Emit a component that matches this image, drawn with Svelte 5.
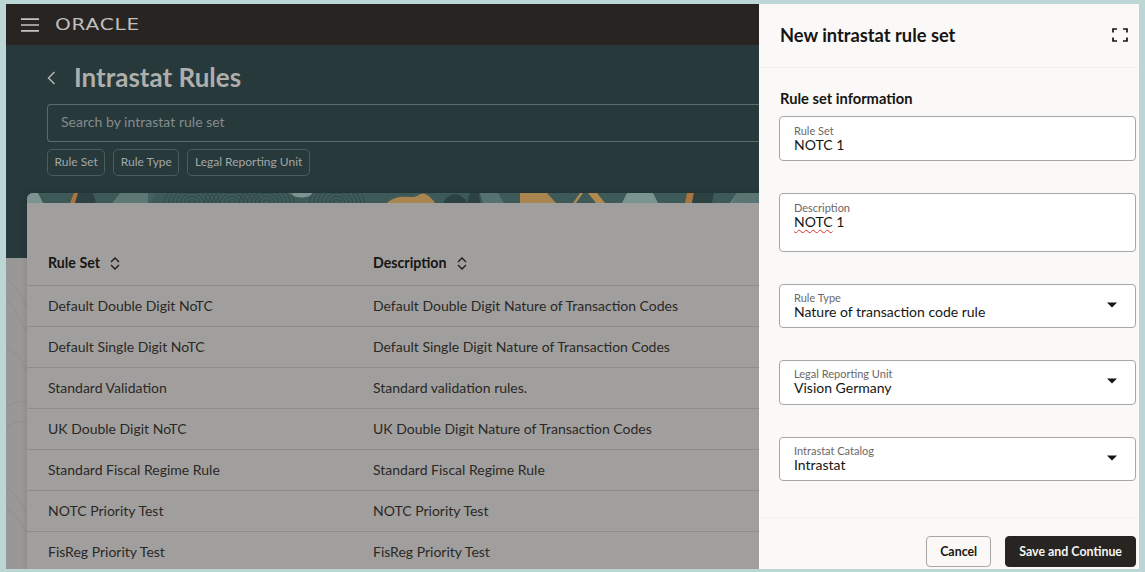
<script>
  const rows = [
    ['Default Double Digit NoTC', 'Default Double Digit Nature of Transaction Codes'],
    ['Default Single Digit NoTC', 'Default Single Digit Nature of Transaction Codes'],
    ['Standard Validation', 'Standard validation rules.'],
    ['UK Double Digit NoTC', 'UK Double Digit Nature of Transaction Codes'],
    ['Standard Fiscal Regime Rule', 'Standard Fiscal Regime Rule'],
    ['NOTC Priority Test', 'NOTC Priority Test'],
    ['FisReg Priority Test', 'FisReg Priority Test']
  ];
  const filters = ['Rule Set', 'Rule Type', 'Legal Reporting Unit'];
  const selects = [
    ['Rule Type', 'Nature of transaction code rule'],
    ['Legal Reporting Unit', 'Vision Germany'],
    ['Intrastat Catalog', 'Intrastat']
  ];
  const arcCentres = [165, 205, 240, 310];
  const radii = [4, 8, 12, 16, 20, 24, 28];
  const hatch = Array.from({ length: 24 }, (_, i) => i);
</script>

<div class="frame">
  <div class="screen">
    <main class="page">
      <header class="topbar">
        <svg class="burger" width="18" height="14" viewBox="0 0 18 14"><path d="M0 1.2h18M0 7h18M0 12.8h18" stroke="#c4c3c1" stroke-width="1.7" fill="none"/></svg>
        <span class="logo">ORACLE</span>
      </header>
      <section class="hero">
        <div class="title-row">
          <svg class="back" width="9" height="14" viewBox="0 0 9 14"><path d="M7.5 1 1.5 7l6 6" stroke="#b5b5b3" stroke-width="1.5" fill="none"/></svg>
          <h1>Intrastat Rules</h1>
        </div>
        <div class="search">Search by intrastat rule set</div>
        <div class="chips">
          {#each filters as f}<span class="chip">{f}</span>{/each}
        </div>
      </section>
      <section class="content">
        <svg class="topo" width="21" height="311" viewBox="0 0 21 311" fill="none" stroke="#8b8987" stroke-width=".6">
          <path d="M0 20c8 6 14 14 21 30M0 40c7 8 12 18 21 34M0 90c10 4 16 12 21 24M0 150c8-6 15-8 21-6M0 170c8-6 15-8 21-6M0 230c9 5 15 14 21 26M0 250c9 5 15 14 21 26"/>
        </svg>
        <div class="card">
          <svg class="strip" width="732" height="10" viewBox="0 0 732 10">
            <rect width="732" height="10" fill="#3e5a58"/>
            <path d="M0 0h11l5 10H0z" fill="#7b9492"/>
            <path d="M47 0h6l-4 10h-6z" fill="#a9743f"/>
            <path d="M51 0h15l3 10H48z" fill="#2b4142"/>
            <path d="M86 10l7-10h28v10z" fill="#6f8886"/>
            <g stroke="#4f6a68" stroke-width=".8">
              {#each hatch as h}<path d="M{88 + h * 1.500} 10l6-10"/>{/each}
            </g>
            <path d="M262 0h24c-4 6-18 6-24 0z" fill="#7b9492"/>
            <g fill="none" stroke="#2f4546" stroke-width=".8">
              {#each arcCentres as c}
                {#each radii as r}
                  <circle cx={c} cy={10 + r * 0.15} r={r}/>
                {/each}
              {/each}
            </g>
            <path d="M360 10c6-6 14-7 24-6 6 1 10-5 14-3 5 2 8 6 10 9z" fill="#a9854f"/>
            <path d="M416 10c4-8 12-11 18-7 3 2 5 4 6 7z" fill="#2b4142"/>
            <path d="M440 10l3-10h9l1 10z" fill="#2b4142"/>
            <path d="M453 0h18l6 10h-21z" fill="#567270"/>
            <path d="M493 0h27l9 10h-36z" fill="#a9854f"/>
            <path d="M546 10l7-10h3l-7 10z" fill="#b08a4f"/>
            <path d="M561 0h9l8 10h-9z" fill="#b08a4f"/>
            <path d="M600 0h26l5 10h-36z" fill="#7b9492"/>
            <path d="M660 0h7l-2 10h-7z" fill="#a9743f"/>
            <path d="M667 0h20l-2 10h-20z" fill="#2b4142"/>
            <path d="M703 10l7-10h22v10z" fill="#6f8886"/>
            <g stroke="#4f6a68" stroke-width=".8">
              {#each hatch as h}<path d="M{705 + h * 1.200} 10l6-10"/>{/each}
            </g>
          </svg>
          <div class="table">
            <div class="row head">
              <div class="cell name">Rule Set <svg class="sort" width="10" height="13" viewBox="0 0 10 13"><path d="M1 5l4-4 4 4M1 8l4 4 4-4" stroke="#1d1b1a" stroke-width="1.3" fill="none"/></svg></div>
              <div class="cell">Description <svg class="sort" width="10" height="13" viewBox="0 0 10 13"><path d="M1 5l4-4 4 4M1 8l4 4 4-4" stroke="#1d1b1a" stroke-width="1.3" fill="none"/></svg></div>
            </div>
            {#each rows as r}
              <div class="row">
                <div class="cell name">{r[0]}</div>
                <div class="cell">{r[1]}</div>
              </div>
            {/each}
          </div>
        </div>
      </section>
    </main>

    <aside class="panel">
      <div class="panel-head">
        <h2>New intrastat rule set</h2>
        <svg width="16" height="14" viewBox="0 0 16 14"><path d="M1 4.500V1h4M11 1h4v3.500M1 9.500V13h4M11 13h4V9.500" stroke="#161513" stroke-width="1.7" fill="none"/></svg>
      </div>
      <div class="panel-body">
        <h3>Rule set information</h3>
        <div class="field">
          <span class="label">Rule Set</span>
          <span class="value">NOTC 1</span>
        </div>
        <div class="field tall">
          <span class="label">Description</span>
          <span class="value"><span class="spell">NOTC</span> 1</span>
        </div>
        {#each selects as s}
          <div class="field select">
            <div class="stack">
              <span class="label">{s[0]}</span>
              <span class="value">{s[1]}</span>
            </div>
            <svg width="10" height="6" viewBox="0 0 10 6"><path d="M0 .5h10L5 5.500z" fill="#161513"/></svg>
          </div>
        {/each}
      </div>
      <div class="panel-foot">
        <button class="btn">Cancel</button>
        <button class="btn primary">Save and Continue</button>
      </div>
    </aside>
  </div>
</div>

<style>
  :global(body) {
    margin: 0;
    background: #bcd5d5;
    font-family: "Lato", "Noto Sans", sans-serif;
  }
  .frame {
    box-sizing: border-box;
    height: 572px;
    padding: 4px 6px 3px 6px;
    overflow: hidden;
  }
  .screen {
    display: flex;
    height: 565px;
    overflow: hidden;
  }
  .page {
    width: 753px;
    flex: none;
    display: flex;
    flex-direction: column;
    background: #a19f9d;
    overflow: hidden;
  }
  .topbar {
    height: 41px;
    flex: none;
    background: #282421;
    display: flex;
    align-items: center;
    padding-left: 15px;
    gap: 16px;
  }
  .logo {
    font-family: "DejaVu Sans", sans-serif;
    font-size: 15px;
    letter-spacing: 0.6px;
    padding-top: 1px;
    transform: scaleX(1.34);
    transform-origin: left center;
    color: #c0bfbd;
    line-height: 1;
  }
  .hero {
    height: 213px;
    flex: none;
    box-sizing: border-box;
    background: #27393b;
    padding: 17px 0 0 41px;
  }
  .title-row {
    display: flex;
    align-items: center;
    gap: 18px;
    height: 31px;
  }
  .back { flex: none; }
  h1 {
    margin: 0;
    font-size: 26px;
    font-weight: 700;
    color: #aeaeac;
    line-height: 31px;
  }
  .search {
    box-sizing: border-box;
    margin-top: 11px;
    height: 38px;
    border: 1px solid #5b6b6c;
    border-right: 0;
    border-radius: 4px 0 0 4px;
    padding-left: 13px;
    font-size: 14.05px;
    line-height: 34px;
    color: #848c8c;
  }
  .chips {
    display: flex;
    gap: 8px;
    margin-top: 7px;
  }
  .chip {
    box-sizing: border-box;
    height: 27px;
    padding: 0 6.5px;
    border: 1px solid #4b5c5d;
    border-radius: 5px;
    font-size: 12px;
    line-height: 24px;
    color: #a3a6a5;
  }
  .content {
    flex: 1;
    background: #9a9896;
    position: relative;
    min-height: 0;
    padding-left: 21px;
  }
  .topo {
    position: absolute;
    left: 0;
    top: 0;
  }
  .card {
    position: relative;
    margin-top: -65px;
    background: #a19f9d;
    border-radius: 6px 0 0 0;
    box-shadow: 0 0 6px rgba(0, 0, 0, 0.14);
    overflow: hidden;
    height: 376px;
  }
  .strip { display: block; }
  .table { padding-top: 51px; }
  .row {
    display: flex;
    height: 41px;
    align-items: center;
    box-sizing: border-box;
    border-top: 1px solid #8f8d8b;
    padding: 0 0 2px 21px;
    font-size: 14px;
    color: #2a2826;
  }
  .row.head {
    height: 31px;
    border-top: 0;
    font-size: 14.2px;
    font-weight: 700;
    color: #161513;
    align-items: flex-start;
  }
  .cell.name { width: 325px; flex: none; }
  .cell { white-space: nowrap; }
  .sort { margin-left: 7px; vertical-align: -2px; }

  .panel {
    flex: 1;
    min-width: 0;
    background: #fbf9f8;
    display: flex;
    flex-direction: column;
  }
  .panel-head {
    height: 64px;
    flex: none;
    box-sizing: border-box;
    border-bottom: 1px solid #f3f1ef;
    display: flex;
    align-items: center;
    justify-content: space-between;
    padding: 0 11px 2px 21px;
  }
  h2 {
    margin: 0;
    font-size: 18.3px;
    font-weight: 700;
    color: #161513;
  }
  .panel-body {
    flex: 1;
    padding: 21px 3px 0 20px;
    min-height: 0;
  }
  h3 {
    margin: 0 0 0 1px;
    font-size: 14.7px;
    line-height: 19px;
    font-weight: 700;
    color: #161513;
  }
  .field {
    box-sizing: border-box;
    height: 44.6px;
    margin-top: 32px;
    background: #fff;
    border: 1px solid #a9a7a5;
    border-radius: 4px;
    padding: 7px 14px 0;
    display: flex;
    flex-direction: column;
  }
  h3 + .field { margin-top: 8px; }
  .field.tall { height: 59px; }
  .field.select {
    flex-direction: row;
    align-items: center;
    justify-content: space-between;
    padding: 0 18px 2px 14px;
  }
  .stack { display: flex; flex-direction: column; }
  .label {
    font-size: 11px;
    line-height: 13px;
    color: #6b6865;
  }
  .value {
    font-size: 14px;
    line-height: 15px;
    color: #161513;
  }
  .spell {
    text-decoration: underline wavy #d8322a 1px;
    text-underline-offset: 2px;
  }
  .panel-foot {
    height: 52px;
    flex: none;
    box-sizing: border-box;
    border-top: 1px solid #f3f1ef;
    display: flex;
    justify-content: flex-end;
    align-items: flex-start;
    gap: 14px;
    padding: 18px 3px 0 0;
  }
  .btn {
    height: 31px;
    box-sizing: border-box;
    padding: 0 13px;
    border: 1px solid #a9a7a5;
    border-radius: 4px;
    background: #fbf9f8;
    color: #161513;
    font-family: inherit;
    font-size: 12.4px;
    font-weight: 700;
  }
  .btn.primary {
    background: #282421;
    border-color: #282421;
    color: #f5f4f2;
  }
</style>
